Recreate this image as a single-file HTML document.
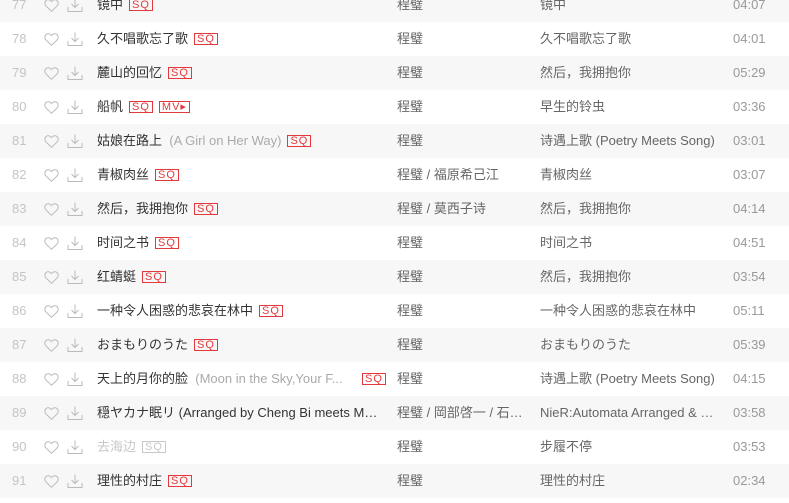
<!DOCTYPE html>
<html><head><meta charset="utf-8">
<style>
*{margin:0;padding:0;box-sizing:border-box}
body{width:789px;height:503px;overflow:hidden;background:#fff;font-family:"Liberation Sans","Noto Sans CJK SC",sans-serif;font-size:13px;color:#333;position:relative}
.r{position:absolute;left:0;width:789px;height:34px;line-height:34px;white-space:nowrap}
.g{background:#f7f7f7}
.r>*{position:absolute;top:0}
.n{left:12px;color:#c4c4c4;font-size:13px}
.h{left:44px;top:11px!important}
.d{left:67px;top:10px!important}
.t{left:97px;width:290px;overflow:hidden}
.a{left:397px;width:130px;overflow:hidden;text-overflow:ellipsis;color:#666}
.al{left:540px;width:178px;overflow:hidden;text-overflow:ellipsis;color:#666}
.du{left:733px;color:#999}
.s{color:#aaa}
.b{display:inline-block;height:12px;line-height:10px;border:1px solid #e4393c;color:#e4393c;font-size:11px;padding:0 2px;vertical-align:middle;margin-left:6px;font-weight:normal;letter-spacing:1px;position:relative;top:-1px}
.dis,.dis .b{color:#c8c8c8;border-color:#c8c8c8}
</style></head><body>
<div class="r g" style="top:-12px"><span class="n">77</span><svg class="h" width="15" height="13" viewBox="0 0 15 13"><path d="M7.5 12.3 L2 7 C0.3 5.3 0.5 2.5 2.3 1.3 C4 0.2 6.3 0.8 7.5 2.6 C8.7 0.8 11 0.2 12.7 1.3 C14.5 2.5 14.7 5.3 13 7 Z" fill="none" stroke="#bbb" stroke-width="1"/></svg><svg class="d" width="16" height="15" viewBox="0 0 16 15"><path d="M8 0.5 V9.5 M4.5 6 L8 9.5 L11.5 6 M1 9 V13.5 H15 V9" fill="none" stroke="#bbb" stroke-width="1"/></svg><span class="t">镜中<span class="b">SQ</span></span><span class="a">程璧</span><span class="al">镜中</span><span class="du">04:07</span></div>
<div class="r" style="top:22px"><span class="n">78</span><svg class="h" width="15" height="13" viewBox="0 0 15 13"><path d="M7.5 12.3 L2 7 C0.3 5.3 0.5 2.5 2.3 1.3 C4 0.2 6.3 0.8 7.5 2.6 C8.7 0.8 11 0.2 12.7 1.3 C14.5 2.5 14.7 5.3 13 7 Z" fill="none" stroke="#bbb" stroke-width="1"/></svg><svg class="d" width="16" height="15" viewBox="0 0 16 15"><path d="M8 0.5 V9.5 M4.5 6 L8 9.5 L11.5 6 M1 9 V13.5 H15 V9" fill="none" stroke="#bbb" stroke-width="1"/></svg><span class="t">久不唱歌忘了歌<span class="b">SQ</span></span><span class="a">程璧</span><span class="al">久不唱歌忘了歌</span><span class="du">04:01</span></div>
<div class="r g" style="top:56px"><span class="n">79</span><svg class="h" width="15" height="13" viewBox="0 0 15 13"><path d="M7.5 12.3 L2 7 C0.3 5.3 0.5 2.5 2.3 1.3 C4 0.2 6.3 0.8 7.5 2.6 C8.7 0.8 11 0.2 12.7 1.3 C14.5 2.5 14.7 5.3 13 7 Z" fill="none" stroke="#bbb" stroke-width="1"/></svg><svg class="d" width="16" height="15" viewBox="0 0 16 15"><path d="M8 0.5 V9.5 M4.5 6 L8 9.5 L11.5 6 M1 9 V13.5 H15 V9" fill="none" stroke="#bbb" stroke-width="1"/></svg><span class="t">麓山的回忆<span class="b">SQ</span></span><span class="a">程璧</span><span class="al">然后，我拥抱你</span><span class="du">05:29</span></div>
<div class="r" style="top:90px"><span class="n">80</span><svg class="h" width="15" height="13" viewBox="0 0 15 13"><path d="M7.5 12.3 L2 7 C0.3 5.3 0.5 2.5 2.3 1.3 C4 0.2 6.3 0.8 7.5 2.6 C8.7 0.8 11 0.2 12.7 1.3 C14.5 2.5 14.7 5.3 13 7 Z" fill="none" stroke="#bbb" stroke-width="1"/></svg><svg class="d" width="16" height="15" viewBox="0 0 16 15"><path d="M8 0.5 V9.5 M4.5 6 L8 9.5 L11.5 6 M1 9 V13.5 H15 V9" fill="none" stroke="#bbb" stroke-width="1"/></svg><span class="t">船帆<span class="b">SQ</span><span class="b" style="margin-left:6px">MV▸</span></span><span class="a">程璧</span><span class="al">早生的铃虫</span><span class="du">03:36</span></div>
<div class="r g" style="top:124px"><span class="n">81</span><svg class="h" width="15" height="13" viewBox="0 0 15 13"><path d="M7.5 12.3 L2 7 C0.3 5.3 0.5 2.5 2.3 1.3 C4 0.2 6.3 0.8 7.5 2.6 C8.7 0.8 11 0.2 12.7 1.3 C14.5 2.5 14.7 5.3 13 7 Z" fill="none" stroke="#bbb" stroke-width="1"/></svg><svg class="d" width="16" height="15" viewBox="0 0 16 15"><path d="M8 0.5 V9.5 M4.5 6 L8 9.5 L11.5 6 M1 9 V13.5 H15 V9" fill="none" stroke="#bbb" stroke-width="1"/></svg><span class="t">姑娘在路上 <span class="s">&nbsp;(A Girl on Her Way)</span><span class="b">SQ</span></span><span class="a">程璧</span><span class="al">诗遇上歌 (Poetry Meets Song)</span><span class="du">03:01</span></div>
<div class="r" style="top:158px"><span class="n">82</span><svg class="h" width="15" height="13" viewBox="0 0 15 13"><path d="M7.5 12.3 L2 7 C0.3 5.3 0.5 2.5 2.3 1.3 C4 0.2 6.3 0.8 7.5 2.6 C8.7 0.8 11 0.2 12.7 1.3 C14.5 2.5 14.7 5.3 13 7 Z" fill="none" stroke="#bbb" stroke-width="1"/></svg><svg class="d" width="16" height="15" viewBox="0 0 16 15"><path d="M8 0.5 V9.5 M4.5 6 L8 9.5 L11.5 6 M1 9 V13.5 H15 V9" fill="none" stroke="#bbb" stroke-width="1"/></svg><span class="t">青椒肉丝<span class="b">SQ</span></span><span class="a">程璧 / 福原希己江</span><span class="al">青椒肉丝</span><span class="du">03:07</span></div>
<div class="r g" style="top:192px"><span class="n">83</span><svg class="h" width="15" height="13" viewBox="0 0 15 13"><path d="M7.5 12.3 L2 7 C0.3 5.3 0.5 2.5 2.3 1.3 C4 0.2 6.3 0.8 7.5 2.6 C8.7 0.8 11 0.2 12.7 1.3 C14.5 2.5 14.7 5.3 13 7 Z" fill="none" stroke="#bbb" stroke-width="1"/></svg><svg class="d" width="16" height="15" viewBox="0 0 16 15"><path d="M8 0.5 V9.5 M4.5 6 L8 9.5 L11.5 6 M1 9 V13.5 H15 V9" fill="none" stroke="#bbb" stroke-width="1"/></svg><span class="t">然后，我拥抱你<span class="b">SQ</span></span><span class="a">程璧 / 莫西子诗</span><span class="al">然后，我拥抱你</span><span class="du">04:14</span></div>
<div class="r" style="top:226px"><span class="n">84</span><svg class="h" width="15" height="13" viewBox="0 0 15 13"><path d="M7.5 12.3 L2 7 C0.3 5.3 0.5 2.5 2.3 1.3 C4 0.2 6.3 0.8 7.5 2.6 C8.7 0.8 11 0.2 12.7 1.3 C14.5 2.5 14.7 5.3 13 7 Z" fill="none" stroke="#bbb" stroke-width="1"/></svg><svg class="d" width="16" height="15" viewBox="0 0 16 15"><path d="M8 0.5 V9.5 M4.5 6 L8 9.5 L11.5 6 M1 9 V13.5 H15 V9" fill="none" stroke="#bbb" stroke-width="1"/></svg><span class="t">时间之书<span class="b">SQ</span></span><span class="a">程璧</span><span class="al">时间之书</span><span class="du">04:51</span></div>
<div class="r g" style="top:260px"><span class="n">85</span><svg class="h" width="15" height="13" viewBox="0 0 15 13"><path d="M7.5 12.3 L2 7 C0.3 5.3 0.5 2.5 2.3 1.3 C4 0.2 6.3 0.8 7.5 2.6 C8.7 0.8 11 0.2 12.7 1.3 C14.5 2.5 14.7 5.3 13 7 Z" fill="none" stroke="#bbb" stroke-width="1"/></svg><svg class="d" width="16" height="15" viewBox="0 0 16 15"><path d="M8 0.5 V9.5 M4.5 6 L8 9.5 L11.5 6 M1 9 V13.5 H15 V9" fill="none" stroke="#bbb" stroke-width="1"/></svg><span class="t">红蜻蜓<span class="b">SQ</span></span><span class="a">程璧</span><span class="al">然后，我拥抱你</span><span class="du">03:54</span></div>
<div class="r" style="top:294px"><span class="n">86</span><svg class="h" width="15" height="13" viewBox="0 0 15 13"><path d="M7.5 12.3 L2 7 C0.3 5.3 0.5 2.5 2.3 1.3 C4 0.2 6.3 0.8 7.5 2.6 C8.7 0.8 11 0.2 12.7 1.3 C14.5 2.5 14.7 5.3 13 7 Z" fill="none" stroke="#bbb" stroke-width="1"/></svg><svg class="d" width="16" height="15" viewBox="0 0 16 15"><path d="M8 0.5 V9.5 M4.5 6 L8 9.5 L11.5 6 M1 9 V13.5 H15 V9" fill="none" stroke="#bbb" stroke-width="1"/></svg><span class="t">一种令人困惑的悲哀在林中<span class="b">SQ</span></span><span class="a">程璧</span><span class="al">一种令人困惑的悲哀在林中</span><span class="du">05:11</span></div>
<div class="r g" style="top:328px"><span class="n">87</span><svg class="h" width="15" height="13" viewBox="0 0 15 13"><path d="M7.5 12.3 L2 7 C0.3 5.3 0.5 2.5 2.3 1.3 C4 0.2 6.3 0.8 7.5 2.6 C8.7 0.8 11 0.2 12.7 1.3 C14.5 2.5 14.7 5.3 13 7 Z" fill="none" stroke="#bbb" stroke-width="1"/></svg><svg class="d" width="16" height="15" viewBox="0 0 16 15"><path d="M8 0.5 V9.5 M4.5 6 L8 9.5 L11.5 6 M1 9 V13.5 H15 V9" fill="none" stroke="#bbb" stroke-width="1"/></svg><span class="t">おまもりのうた<span class="b">SQ</span></span><span class="a">程璧</span><span class="al">おまもりのうた</span><span class="du">05:39</span></div>
<div class="r" style="top:362px"><span class="n">88</span><svg class="h" width="15" height="13" viewBox="0 0 15 13"><path d="M7.5 12.3 L2 7 C0.3 5.3 0.5 2.5 2.3 1.3 C4 0.2 6.3 0.8 7.5 2.6 C8.7 0.8 11 0.2 12.7 1.3 C14.5 2.5 14.7 5.3 13 7 Z" fill="none" stroke="#bbb" stroke-width="1"/></svg><svg class="d" width="16" height="15" viewBox="0 0 16 15"><path d="M8 0.5 V9.5 M4.5 6 L8 9.5 L11.5 6 M1 9 V13.5 H15 V9" fill="none" stroke="#bbb" stroke-width="1"/></svg><span class="t" style="width:260px">天上的月你的脸 <span class="s">&nbsp;(Moon in the Sky,Your F...</span></span><span class="b" style="left:362px;top:11px;position:absolute;margin:0">SQ</span><span class="a">程璧</span><span class="al">诗遇上歌 (Poetry Meets Song)</span><span class="du">04:15</span></div>
<div class="r g" style="top:396px"><span class="n">89</span><svg class="h" width="15" height="13" viewBox="0 0 15 13"><path d="M7.5 12.3 L2 7 C0.3 5.3 0.5 2.5 2.3 1.3 C4 0.2 6.3 0.8 7.5 2.6 C8.7 0.8 11 0.2 12.7 1.3 C14.5 2.5 14.7 5.3 13 7 Z" fill="none" stroke="#bbb" stroke-width="1"/></svg><svg class="d" width="16" height="15" viewBox="0 0 16 15"><path d="M8 0.5 V9.5 M4.5 6 L8 9.5 L11.5 6 M1 9 V13.5 H15 V9" fill="none" stroke="#bbb" stroke-width="1"/></svg><span class="t" style="width:282px;text-overflow:ellipsis">穏ヤカナ眠リ (Arranged by Cheng Bi meets Monaca)</span><span class="a">程璧 / 岡部啓一 / 石濱翔</span><span class="al">NieR:Automata Arranged &amp; Unarranged</span><span class="du">03:58</span></div>
<div class="r" style="top:430px"><span class="n">90</span><svg class="h" width="15" height="13" viewBox="0 0 15 13"><path d="M7.5 12.3 L2 7 C0.3 5.3 0.5 2.5 2.3 1.3 C4 0.2 6.3 0.8 7.5 2.6 C8.7 0.8 11 0.2 12.7 1.3 C14.5 2.5 14.7 5.3 13 7 Z" fill="none" stroke="#bbb" stroke-width="1"/></svg><svg class="d" width="16" height="15" viewBox="0 0 16 15"><path d="M8 0.5 V9.5 M4.5 6 L8 9.5 L11.5 6 M1 9 V13.5 H15 V9" fill="none" stroke="#bbb" stroke-width="1"/></svg><span class="t dis">去海边<span class="b">SQ</span></span><span class="a">程璧</span><span class="al">步履不停</span><span class="du">03:53</span></div>
<div class="r g" style="top:464px"><span class="n">91</span><svg class="h" width="15" height="13" viewBox="0 0 15 13"><path d="M7.5 12.3 L2 7 C0.3 5.3 0.5 2.5 2.3 1.3 C4 0.2 6.3 0.8 7.5 2.6 C8.7 0.8 11 0.2 12.7 1.3 C14.5 2.5 14.7 5.3 13 7 Z" fill="none" stroke="#bbb" stroke-width="1"/></svg><svg class="d" width="16" height="15" viewBox="0 0 16 15"><path d="M8 0.5 V9.5 M4.5 6 L8 9.5 L11.5 6 M1 9 V13.5 H15 V9" fill="none" stroke="#bbb" stroke-width="1"/></svg><span class="t">理性的村庄<span class="b">SQ</span></span><span class="a">程璧</span><span class="al">理性的村庄</span><span class="du">02:34</span></div>
</body></html>
